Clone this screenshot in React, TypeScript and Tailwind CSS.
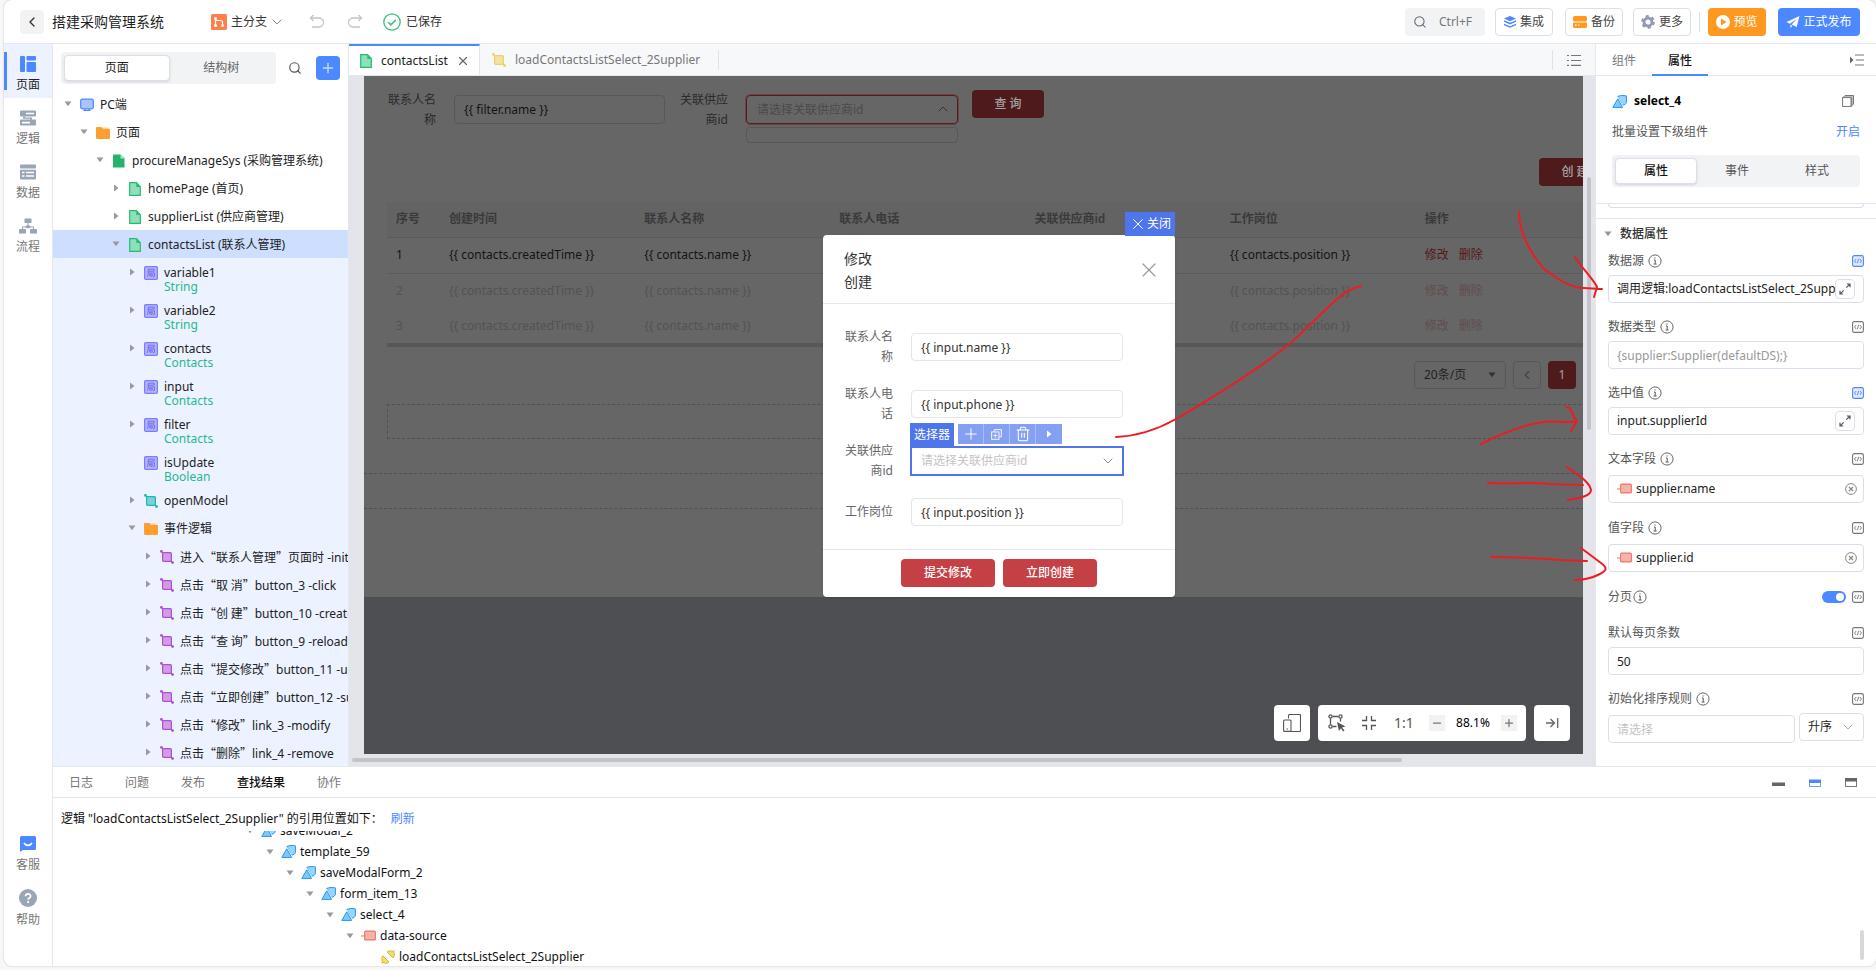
import React, { useState } from "react";
import {
  ChevronDown,
  ChevronLeft,
  ChevronUp,
  Minus,
  Plus,
  Search,
  Trash2,
  X,
} from "lucide-react";

type IconProps = { className?: string };

/* ---------- icons ---------- */

function PageIcon({ solid = false }: { solid?: boolean }) {
  return (
    <svg viewBox="0 0 14 14" className="h-3.5 w-3.5 shrink-0">
      {solid ? (
        <>
          <path d="M1 0.5h7.5l4 4V13.5H1z" fill="#24b36b" />
          <path d="M8.5 0.5l4 4h-4z" fill="#a5e3c5" />
        </>
      ) : (
        <path d="M1.7 0.7h6.8l3.8 4v8.6H1.7z" fill="#8fdfb8" stroke="#24bd70" strokeWidth="1.2" />
      )}
      {!solid && <path d="M8.3 0.7l4 4.2h-4z" fill="#24bd70" />}
    </svg>
  );
}

function FolderIcon() {
  return (
    <svg viewBox="0 0 14 14" className="h-3.5 w-3.5 shrink-0">
      <path d="M6 3V1.6h6.2l1.2 2V5z" fill="#ffd08a" />
      <path d="M0 2.2C0 1.4.5 1 1.2 1h4L7 3h6c.6 0 1 .4 1 1v7.8c0 .7-.4 1.2-1.2 1.2H1.2C.5 13 0 12.5 0 11.8z" fill="#fb9f30" />
    </svg>
  );
}

function MonitorIcon() {
  return (
    <svg viewBox="0 0 14 14" className="h-3.5 w-3.5 shrink-0">
      <rect x="0.7" y="1.2" width="12.6" height="9.6" rx="1.5" fill="#a9c5ff" stroke="#4c88ff" strokeWidth="1.2" />
      <path d="M3.5 12.5h7M5 11v1.5M9 11v1.5" stroke="#4c88ff" strokeWidth="1.2" />
    </svg>
  );
}

function VariableIcon() {
  return (
    <svg viewBox="0 0 14 14" className="h-3.5 w-3.5 shrink-0">
      <rect x="0.6" y="0.6" width="12.8" height="12.8" rx="1.2" fill="#b3b4ff" stroke="#7d7bff" strokeWidth="1.2" />
      <path d="M4.2 3.2h6v2h-6zM4.2 5.2v3l-1 2.6M4.5 7h6v3.3l-1.5.5M5.7 8.3h2.6v1.8H5.7z" fill="none" stroke="#6a68f0" strokeWidth="0.9" />
    </svg>
  );
}

function LogicIcon({ tone }: { tone: "teal" | "purple" | "yellow" }) {
  const colors = {
    teal: ["#78d3d4", "#22b5b6"],
    purple: ["#d29be8", "#b04fd6"],
    yellow: ["#f3e3a3", "#ecd06a"],
  };
  const [fill, stroke] = colors[tone];
  return (
    <svg viewBox="0 0 14 14" className="h-3.5 w-3.5 shrink-0">
      <path d="M1.4 1.4l2 2M10.5 10.5l2 2" stroke={stroke} strokeWidth="1.2" />
      <rect x="2.6" y="2.6" width="8.8" height="8.8" rx="1" fill={fill} stroke={stroke} strokeWidth="1.2" />
      <circle cx="1.4" cy="1.4" r="1.4" fill={stroke} />
      <circle cx="12.6" cy="12.6" r="1.4" fill={stroke} />
    </svg>
  );
}

function WidgetIcon() {
  return (
    <svg viewBox="0 0 15 13" className="h-[13px] w-[15px] shrink-0">
      <path d="M5.800 1.400C8.500.4 11.500.3 14.400.9v6.300c-.4 1.800-1.800 2.800-4 3z" fill="#99d5ff" stroke="#2196f3" />
      <path d="M5.800 3.800L10.600 12.400H.8z" fill="#7cc8ff" stroke="#fff" strokeWidth="2.400" />
      <path d="M5.800 3.800L10.600 12.400H.8z" fill="#7cc8ff" stroke="#2196f3" />
    </svg>
  );
}

function FieldIcon() {
  return (
    <svg viewBox="0 0 15 12" className="h-3 w-[15px] shrink-0">
      <path d="M0 6h3" stroke="#f0a095" strokeWidth="1.5" />
      <rect x="3.6" y="1.1" width="10.8" height="8.8" rx="1" fill="#f6b3a8" stroke="#e8796a" strokeWidth="1.1" />
    </svg>
  );
}

function CallIcon() {
  return (
    <svg viewBox="0 0 14 14" className="h-3.5 w-3.5 shrink-0">
      <path d="M.5 13.5l1.500-1.500M13.500.5L12 2" stroke="#d9b930" strokeWidth="1.200" />
      <path d="M1.800 5.800l6.200 6.200c-2 1.600-4.600 1.600-6 .2-1.400-1.500-1.700-4.300-.2-6.400z" fill="#f1dc7a" stroke="#d9b930" />
      <path d="M6 2l6 6c1.700-1.800 2-4.500.6-6C11.200.600 8 .400 6 2z" fill="#f1dc7a" stroke="#d9b930" />
    </svg>
  );
}

function InfoIcon() {
  return (
    <svg viewBox="0 0 14 14" className="h-3.5 w-3.5 shrink-0" fill="none" stroke="#555">
      <circle cx="7" cy="7" r="6.1" strokeWidth="0.9" />
      <path d="M6 6h1.200v3.800M5.600 10h3M7 3.400v1.200" strokeWidth="1" />
    </svg>
  );
}

function CodeIcon({ active = false }: { active?: boolean }) {
  return (
    <svg viewBox="0 0 12 12" className="h-3 w-3 shrink-0" fill={active ? "#dfe9ff" : "none"} stroke={active ? "#4c88ff" : "#777"}>
      <rect x="0.6" y="0.6" width="10.8" height="10.8" rx="1.6" strokeWidth="1.1" />
      <path d="M4.2 4L2.5 6l1.7 2M7.8 4l1.7 2-1.7 2M6.6 3.8L5.4 8.2" strokeWidth="0.9" fill="none" />
    </svg>
  );
}

function Caret({ open, className = "" }: { open: boolean; className?: string }) {
  return (
    <svg viewBox="0 0 8 8" className={`h-2 w-2 shrink-0 ${className}`} fill="#999">
      {open ? <path d="M0.5 1.5h7L4 6.2z" /> : <path d="M2 0.5v7L6.5 4z" />}
    </svg>
  );
}

function UndoIcon({ className = "" }: IconProps) {
  return (
    <svg viewBox="0 0 16 16" className={`h-4 w-4 ${className}`} fill="none" stroke="#c4c4c4" strokeWidth="1.3">
      <path d="M4.5 1L1.5 4l3 3" />
      <path d="M1.5 4H10a4.5 4.5 0 010 9H3" />
    </svg>
  );
}

function NavPagesIcon() {
  return (
    <svg viewBox="0 0 16 16" className="h-4 w-4" fill="#4c88ff">
      <rect x="0" y="0" width="5" height="16" rx="1" />
      <rect x="6.5" y="0" width="9.5" height="4.5" rx="1" />
      <rect x="6.5" y="6" width="9.5" height="10" rx="1" />
    </svg>
  );
}

function NavLogicIcon() {
  return (
    <svg viewBox="0 0 16 16" className="h-4 w-4" fill="#9aa5b5">
      <path fillRule="evenodd" d="M1 0.5h14a1 1 0 011 1v4a1 1 0 01-1 1H1a1 1 0 01-1-1v-4a1 1 0 011-1zM6 2.700v1.600h8V2.700z" />
      <path fillRule="evenodd" d="M1 9.5h14a1 1 0 011 1v4a1 1 0 01-1 1H1a1 1 0 01-1-1v-4a1 1 0 011-1zM2 11.8v1.6h8v-1.600z" />
      <path d="M3 6.5h2v1h7v2.2h-2V8.800H3z" />
    </svg>
  );
}

function NavDataIcon() {
  return (
    <svg viewBox="0 0 16 16" className="h-4 w-4">
      <rect x="0" y="0.5" width="16" height="4" rx="1" fill="#9aa5b5" />
      <path fill="#9aa5b5" d="M0 5.8h16V14.5a1 1 0 01-1 1H1a1 1 0 01-1-1z" />
      <path d="M2 8.5h2.5M6 8.5h8M2 12h2.5M6 12h8" stroke="#fff" strokeWidth="1.5" />
    </svg>
  );
}

function NavFlowIcon() {
  return (
    <svg viewBox="0 0 18 16" className="h-4 w-[18px]" fill="#9aa5b5">
      <rect x="5.5" y="0.5" width="7" height="4.5" rx="0.5" />
      <rect x="0" y="11" width="7" height="4.5" rx="0.5" />
      <rect x="11" y="11" width="7" height="4.5" rx="0.5" />
      <path d="M8.5 5h1v2l2.5 1.5h3V11h-1V9.5h-2.5L9 10.5l-2.5-1H4V11H3V8.5h3L8.5 7z" />
    </svg>
  );
}

function ChatIcon() {
  return (
    <svg viewBox="0 0 16 16" className="h-4 w-4">
      <path d="M1.5 0H14.5a1.5 1.5 0 011.5 1.5v11a1.5 1.5 0 01-1.5 1.5H3L0 16V1.5A1.5 1.5 0 011.5 0z" fill="#4c88ff" />
      <path d="M4 7c2 3.2 6 3.2 8 0" stroke="#fff" strokeWidth="1.6" fill="none" />
    </svg>
  );
}

function HelpIcon() {
  return (
    <svg viewBox="0 0 18 18" className="h-[18px] w-[18px]">
      <circle cx="9" cy="9" r="9" fill="#9aa5b5" />
      <path d="M6.6 7.2c0-3.2 5-3.2 5 0 0 1.8-2.5 1.7-2.5 3.6M9.1 12v2" stroke="#fff" strokeWidth="1.7" fill="none" />
    </svg>
  );
}

/* ---------- data ---------- */

type Row = {
  level: number;
  label: string;
  quote?: string;
  icon: React.ReactNode;
  open?: boolean;
  leaf?: boolean;
  type?: string;
};

const topRows: Row[] = [
  { level: 0, label: "PC端", icon: <MonitorIcon />, open: true },
  { level: 1, label: "页面", icon: <FolderIcon />, open: true },
  { level: 2, label: "procureManageSys (采购管理系统)", icon: <PageIcon solid />, open: true },
  { level: 3, label: "homePage (首页)", icon: <PageIcon /> },
  { level: 3, label: "supplierList (供应商管理)", icon: <PageIcon /> },
];

const childRows: Row[] = [
  { level: 4, label: "variable1", type: "String", icon: <VariableIcon /> },
  { level: 4, label: "variable2", type: "String", icon: <VariableIcon /> },
  { level: 4, label: "contacts", type: "Contacts", icon: <VariableIcon /> },
  { level: 4, label: "input", type: "Contacts", icon: <VariableIcon /> },
  { level: 4, label: "filter", type: "Contacts", icon: <VariableIcon /> },
  { level: 4, label: "isUpdate", type: "Boolean", icon: <VariableIcon />, leaf: true },
  { level: 4, label: "openModel", icon: <LogicIcon tone="teal" /> },
  { level: 4, label: "事件逻辑", icon: <FolderIcon />, open: true },
  { level: 5, quote: "进入“联系人管理”页面时", label: " -init", icon: <LogicIcon tone="purple" /> },
  { level: 5, quote: "点击“取 消”", label: "button_3 -click", icon: <LogicIcon tone="purple" /> },
  { level: 5, quote: "点击“创 建”", label: "button_10 -create", icon: <LogicIcon tone="purple" /> },
  { level: 5, quote: "点击“查 询”", label: "button_9 -reload", icon: <LogicIcon tone="purple" /> },
  { level: 5, quote: "点击“提交修改”", label: "button_11 -update", icon: <LogicIcon tone="purple" /> },
  { level: 5, quote: "点击“立即创建”", label: "button_12 -submit", icon: <LogicIcon tone="purple" /> },
  { level: 5, quote: "点击“修改”", label: "link_3 -modify", icon: <LogicIcon tone="purple" /> },
  { level: 5, quote: "点击“删除”", label: "link_4 -remove", icon: <LogicIcon tone="purple" /> },
];

const resultRows = [
  { label: "saveModal_2", icon: <WidgetIcon /> },
  { label: "template_59", icon: <WidgetIcon /> },
  { label: "saveModalForm_2", icon: <WidgetIcon /> },
  { label: "form_item_13", icon: <WidgetIcon /> },
  { label: "select_4", icon: <WidgetIcon /> },
  { label: "data-source", icon: <FieldIcon /> },
  { label: "loadContactsListSelect_2Supplier", icon: <CallIcon />, leaf: true },
];

const indent = ["pl-[7px]", "pl-[23px]", "pl-[39px]", "pl-[55px]", "pl-[71px]", "pl-[87px]"];

/* ---------- header ---------- */

function Header() {
  return (
    <header className="flex h-11 shrink-0 items-center border-b border-[#e4e7ed] pl-4 pr-4 pt-px">
      <button aria-label="返回" className="flex h-6 w-6 items-center justify-center rounded bg-[#f2f2f3] text-[#333]">
        <ChevronLeft className="h-4 w-4" strokeWidth={2} />
      </button>
      <h1 className="ml-2 text-sm text-[#222]">搭建采购管理系统</h1>
      <button className="ml-[47px] flex items-center text-[#333]">
        <svg viewBox="0 0 16 16" className="mr-1 h-4 w-4">
          <rect width="16" height="16" rx="1.5" fill="#ff7f4a" />
          <path d="M4.500 4.500v7M4.500 6.500h5a2 2 0 012 2v2.500" fill="none" stroke="#fff" strokeWidth="1.200" />
          <g fill="#fff">
            <circle cx="4.5" cy="4.5" r="1.5" />
            <circle cx="4.5" cy="11.5" r="1.5" />
            <circle cx="11.5" cy="11.5" r="1.5" />
          </g>
        </svg>
        主分支
        <ChevronDown className="ml-0.5 h-4 w-4 text-[#888]" strokeWidth={1.500} />
      </button>
      <button aria-label="撤销" className="ml-6">
        <UndoIcon />
      </button>
      <button aria-label="重做" className="ml-[22px]">
        <UndoIcon className="-scale-x-100" />
      </button>
      <svg viewBox="0 0 18 18" className="ml-5 h-[18px] w-[18px]" fill="none" stroke="#3bc17c" strokeWidth="1.3">
        <circle cx="9" cy="9" r="8.2" />
        <path d="M5.2 9.2l2.7 2.7 5-5.2" strokeWidth="1.6" />
      </svg>
      <span className="ml-[5px] text-[#333]">已保存</span>

      <div className="ml-auto flex items-center text-[#444]">
        <button className="flex h-7 w-20 items-center rounded bg-[#f2f3f5] pl-2 text-[#777]">
          <Search className="mr-3 h-3.5 w-3.5 text-[#666]" strokeWidth={1.800} />
          Ctrl+F
        </button>
        <button className="ml-2.5 flex h-7 w-[58px] items-center justify-center gap-1 rounded border border-[#dadfeb]">
          <svg viewBox="0 0 14 14" className="h-3 w-3" fill="#4c88ff">
            <path d="M7 0l7 3-7 3-7-3z" />
            <path d="M0 5l7 3 7-3v1.8l-7 3-7-3z" />
            <path d="M0 9l7 3 7-3v1.8l-7 3-7-3z" />
          </svg>
          集成
        </button>
        <button className="ml-3 flex h-7 w-[58px] items-center justify-center gap-1 rounded border border-[#dadfeb]">
          <svg viewBox="0 0 14 12" className="h-3 w-3.5" fill="#ff9a1e">
            <rect width="14" height="5.4" rx="1.5" />
            <path fillRule="evenodd" d="M0 6.5h14v4A1.5 1.5 0 0112.5 12h-11A1.5 1.5 0 010 10.5zM2 8.5v1.3h1.5V8.5zM5 8.5v1.3h1.5V8.5z" />
          </svg>
          备份
        </button>
        <button className="ml-2.5 flex h-7 w-[58px] items-center justify-center gap-1 rounded border border-[#dadfeb]">
          <svg viewBox="0 0 14 14" className="h-3.5 w-3.5" fill="none" stroke="#9499b8">
            <circle cx="7" cy="7" r="4" strokeWidth="2.8" />
            <circle cx="7" cy="7" r="5.9" strokeWidth="2" strokeDasharray="3.1 3.07" />
          </svg>
          更多
        </button>
        <span className="ml-2 h-5 w-px bg-[#dadfeb]" />
        <button className="ml-2 flex h-7 w-[58px] items-center justify-center gap-[3px] rounded bg-[#ff981e] text-white">
          <svg viewBox="0 0 14 14" className="h-3.5 w-3.5">
            <circle cx="7" cy="7" r="7" fill="#fff" />
            <path d="M5 3.5v7L10.5 7z" fill="#ff981e" />
          </svg>
          预览
        </button>
        <button className="ml-3 flex h-7 w-[82px] items-center justify-center gap-[3px] rounded bg-[#4c88ff] text-white">
          <svg viewBox="0 0 14 13" className="h-3 w-3.5" fill="#fff">
            <path d="M14 0L0 6.5l3.5 1.8L11.5 3 5.5 9.2 11 12z" />
            <path d="M4.3 9.5V13l2-2.4z" />
          </svg>
          正式发布
        </button>
      </div>
    </header>
  );
}

/* ---------- left side ---------- */

function NavRail() {
  const top = [
    { label: "页面", icon: <NavPagesIcon />, active: true },
    { label: "逻辑", icon: <NavLogicIcon /> },
    { label: "数据", icon: <NavDataIcon /> },
    { label: "流程", icon: <NavFlowIcon /> },
  ];
  const bottom = [
    { label: "客服", icon: <ChatIcon /> },
    { label: "帮助", icon: <HelpIcon /> },
  ];
  return (
    <nav className="flex w-[49px] shrink-0 flex-col border-r border-[#e4e7ed]">
      {top.map((item) => (
        <button
          key={item.label}
          className={`relative flex h-[54px] flex-col items-center justify-center gap-[5px] pt-1.5 ${item.active ? "bg-[#ecf2ff] text-[#222]" : "text-[#777]"}`}
        >
          {item.active && <span className="absolute left-0 top-2 h-[38px] w-[3px] bg-[#4c88ff]" />}
          {item.icon}
          <span className="leading-4">{item.label}</span>
        </button>
      ))}
      <div className="mt-auto flex flex-col pb-[34px]">
        {bottom.map((item) => (
          <button key={item.label} className="flex h-[54px] flex-col items-center justify-center gap-[5px] pt-1.5 text-[#777]">
            {item.icon}
            <span className="leading-4">{item.label}</span>
          </button>
        ))}
      </div>
    </nav>
  );
}

function TreeRow({ row }: { row: Row }) {
  return (
    <li className={`flex items-start whitespace-nowrap ${row.type ? "h-[38px]" : "h-7"} ${indent[row.level]}`}>
      <span className="mr-1 flex h-7 w-4 shrink-0 items-center justify-center">
        {!row.leaf && <Caret open={!!row.open} />}
      </span>
      <span className="mr-1.5 flex h-7 shrink-0 items-center pt-0.5">{row.icon}</span>
      <span className="min-w-0 pt-px leading-7">
        {row.quote && <span className="font-['Noto_Sans_CJK_SC',sans-serif]">{row.quote}</span>}
        {row.label}
        {row.type && <span className="-mt-1.5 block leading-3 text-[#27b98e]">{row.type}</span>}
      </span>
    </li>
  );
}

function TreePanel() {
  const [tab, setTab] = useState("页面");
  return (
    <aside className="flex w-[296px] shrink-0 flex-col overflow-hidden border-r border-[#e4e7ed]">
      <div className="flex h-[46px] shrink-0 items-center pl-2 pr-2 pt-0.5">
        <div className="flex h-8 w-[215px] items-center rounded bg-[#f2f3f5] p-[3px]">
          {["页面", "结构树"].map((name) => (
            <button
              key={name}
              onClick={() => setTab(name)}
              className={`h-[26px] flex-1 rounded ${tab === name ? "border border-[#dadfeb] bg-white text-[#222] shadow-sm" : "text-[#666]"}`}
            >
              {name}
            </button>
          ))}
        </div>
        <button aria-label="搜索" className="ml-3">
          <Search className="h-3.5 w-3.5 text-[#555]" />
        </button>
        <button aria-label="新建" className="ml-auto flex h-6 w-6 items-center justify-center rounded bg-[#4c88ff] text-[#c5d9ff]">
          <Plus className="h-4 w-4" />
        </button>
      </div>
      <ul className="text-[#222]">
        {topRows.map((row) => (
          <TreeRow key={row.label} row={row} />
        ))}
      </ul>
      <ul className="bg-[#cddeff] text-[#222]">
        <TreeRow row={{ level: 3, label: "contactsList (联系人管理)", icon: <PageIcon />, open: true }} />
      </ul>
      <ul className="flex-1 bg-[#ecf2ff] text-[#222]">
        {childRows.map((row) => (
          <TreeRow key={row.label + row.quote} row={row} />
        ))}
      </ul>
    </aside>
  );
}

/* ---------- design canvas ---------- */

function EditorTabs() {
  return (
    <div className="flex h-8 shrink-0 items-center border-b border-[#e4e7ed] bg-[#f7f8fa]">
      <button className="flex h-full w-[131px] items-center border-r border-t-2 border-r-[#e4e7ed] border-t-[#4c88ff] bg-white pl-2.5 text-[#222]">
        <PageIcon />
        <span className="ml-2">contactsList</span>
        <X className="ml-2 h-3.5 w-3.5 text-[#666]" />
      </button>
      <button className="flex items-center pl-3 pr-[18px] text-[#777]">
        <LogicIcon tone="yellow" />
        <span className="ml-[9px]">loadContactsListSelect_2Supplier</span>
      </button>
      <span className="h-5 w-px bg-[#dfe2e9]" />
      <span className="ml-auto h-5 w-px bg-[#dfe2e9]" />
      <button aria-label="标签列表" className="px-3.5">
        <svg viewBox="0 0 14 12" className="h-3 w-3.5" stroke="#777" strokeWidth="1.2">
          <path d="M0 1.500h2M4 1.500h10M0 6.500h2M4 6.500h10M0 11.400h2M4 11.400h10" />
        </svg>
      </button>
    </div>
  );
}

function ContactsTable() {
  const heads = ["序号", "创建时间", "联系人名称", "联系人电话", "关联供应商id", "工作岗位", "操作"];
  return (
    <table className="mt-4 w-full table-fixed border-b-4 border-[#575757] text-left">
      <thead>
        <tr className="h-[35px] border-b border-[#5b5b5b] bg-[#636363] text-[#3a3a3a]">
          {heads.map((head, i) => (
            <th key={head} className={`pl-[9px] font-semibold ${i === 0 ? "w-[53px]" : ""}`}>
              {head}
            </th>
          ))}
        </tr>
      </thead>
      <tbody>
        {[1, 2, 3].map((n) => (
          <tr key={n} className={`h-9 ${n === 1 ? "border-b border-[#5b5b5b] text-[#141414]" : "text-[#535353]"}`}>
            <td className="pl-[9px]">{n}</td>
            <td className="pl-[9px]">{"{{ contacts.createdTime }}"}</td>
            <td className="pl-[9px]">{"{{ contacts.name }}"}</td>
            <td />
            <td />
            <td className="pl-[9px]">{"{{ contacts.position }}"}</td>
            <td className={`pl-[9px] ${n === 1 ? "text-[#561719]" : "text-[#614d4e]"}`}>
              <a href="#edit">修改</a>
              <a href="#delete" className="ml-2.5">删除</a>
            </td>
          </tr>
        ))}
      </tbody>
    </table>
  );
}

function ModalRow({ id, label, children }: { id: string; label: string; children: React.ReactNode }) {
  const wrap = label.length > 4;
  return (
    <div className={`flex ${wrap ? "h-10 items-start" : "h-7 items-center"}`}>
      <label htmlFor={id} className="w-[49px] shrink-0 text-right leading-5 text-[#666]">
        {label}
      </label>
      <div className={`relative ml-[18px] w-[212px] ${wrap ? "mt-1.5" : ""}`}>{children}</div>
    </div>
  );
}

function EditModal() {
  const input = "block h-7 w-full rounded border border-[#e5e5e5] bg-white px-[9px] text-[#333] outline-none";
  return (
    <section className="absolute left-1/2 top-[159px] w-[352px] -translate-x-1/2 rounded bg-white shadow">
      <button className="absolute -top-[23px] right-0 flex h-6 w-[50px] items-center justify-center bg-[#4e75ec] text-white">
        <X className="h-[18px] w-[18px]" strokeWidth={1.3} />
        关闭
      </button>
      <div className="flex items-center justify-between border-b border-[#e8e8e8] pb-[10px] pl-[21px] pr-3.5 pt-3">
        <h2 className="text-sm leading-[23px] text-[#333]">
          修改
          <br />
          创建
        </h2>
        <button aria-label="关闭弹窗">
          <X className="h-6 w-6 text-[#999]" strokeWidth={1.2} />
        </button>
      </div>
      <form className="flex flex-col gap-[17px] px-[21px] pb-[23px] pt-[23px]">
        <ModalRow id="m-name" label="联系人名称">
          <input id="m-name" className={input} defaultValue="{{ input.name }}" />
        </ModalRow>
        <ModalRow id="m-phone" label="联系人电话">
          <input id="m-phone" className={input} defaultValue="{{ input.phone }}" />
        </ModalRow>
        <ModalRow id="m-supplier" label="关联供应商id">
          <select id="m-supplier" className="block h-7 w-full appearance-none bg-white px-2.5 text-[#c4c4c4] outline-2 -outline-offset-1 outline-[#4e75ec]">
            <option>请选择关联供应商id</option>
          </select>
          <ChevronDown className="pointer-events-none absolute right-[7px] top-1.5 h-4 w-4 text-[#888]" strokeWidth={1.5} />
          <div className="absolute -left-px -top-6 flex items-start text-white">
            <span className="flex h-6 w-11 items-center justify-center bg-[#4e75ec]">选择器</span>
            <div className="ml-1 mt-px flex h-5 divide-x divide-[#a9bcf7] bg-[#859ff2]">
              <button type="button" aria-label="添加" className="flex w-[26px] items-center justify-center">
                <Plus className="h-[18px] w-[18px]" strokeWidth={1.3} />
              </button>
              <button type="button" aria-label="复制" className="flex w-[26px] items-center justify-center">
                <svg viewBox="0 0 12 12" className="h-[11px] w-[11px]" fill="none" stroke="#fff">
                  <path d="M3.5 3V.7h7.8v7.8H9" />
                  <rect x="0.7" y="3.2" width="8" height="8" />
                  <path d="M4.7 5v4.5M2.5 7.2H7" />
                </svg>
              </button>
              <button type="button" aria-label="删除" className="flex w-[26px] items-center justify-center">
                <Trash2 className="h-4 w-4" strokeWidth={1.6} />
              </button>
              <button type="button" aria-label="更多操作" className="flex w-[26px] items-center justify-center">
                <svg viewBox="0 0 8 8" className="h-2 w-2" fill="#fff">
                  <path d="M2 0.5v7L6.5 4z" />
                </svg>
              </button>
            </div>
          </div>
        </ModalRow>
        <ModalRow id="m-position" label="工作岗位">
          <input id="m-position" className={input} defaultValue="{{ input.position }}" />
        </ModalRow>
      </form>
      <div className="flex justify-center gap-2 border-t border-[#e8e8e8] pb-2.5 pt-[9px] font-medium text-white">
        <button className="h-7 w-[94px] rounded bg-[#c54044]">提交修改</button>
        <button className="h-7 w-[94px] rounded bg-[#c54044]">立即创建</button>
      </div>
    </section>
  );
}

function Artboard() {
  const box = "rounded border border-[#585858]";
  return (
    <div className="relative h-[521px] w-[1270px] bg-[#666] pt-3.5 text-[#2a2a2a]">
      <div className="px-[23px]">
        <div className="flex h-[52px] items-start">
          <label htmlFor="f-name" className="w-[49px] text-right leading-5">联系人名称</label>
          <input
            id="f-name"
            defaultValue="{{ filter.name }}"
            className={`ml-[18px] mt-[5px] h-[29px] w-[211px] px-[9px] text-[#141414] outline-none ${box}`}
          />
          <label htmlFor="f-supplier" className="ml-3.5 w-[49px] text-right leading-5">关联供应商id</label>
          <div className="relative ml-[18px] mt-[5px] w-[212px]">
            <select
              id="f-supplier"
              className="block h-[29px] w-full appearance-none rounded border border-[#561b1d] px-2.5 text-[#4a4a4a] outline outline-[#6a4445]"
            >
              <option>请选择关联供应商id</option>
            </select>
            <ChevronUp className="pointer-events-none absolute right-[7px] top-1.5 h-4 w-4 text-[#333]" strokeWidth={1.5} />
            <div className={`mt-[3px] h-4 ${box}`} />
          </div>
          <button className="ml-3.5 h-7 w-[72px] rounded bg-[#4f1a1b] font-medium text-[#a3a3a3]">查 询</button>
        </div>
        <div className="mt-4 flex justify-end">
          <button className="h-7 w-[72px] rounded bg-[#4f1a1b] font-medium text-[#a3a3a3]">创 建</button>
        </div>
        <ContactsTable />
        <div className="mt-3.5 flex justify-end gap-[7px]">
          <div className="relative">
            <select aria-label="每页条数" className={`h-7 w-[92px] appearance-none px-[9px] text-[#222] ${box}`}>
              <option>20条/页</option>
            </select>
            <svg viewBox="0 0 8 8" className="pointer-events-none absolute right-2.5 top-2.5 h-2 w-2" fill="#333">
              <path d="M0.5 1.5h7L4 6.2z" />
            </svg>
          </div>
          <button aria-label="上一页" className={`flex h-7 w-7 items-center justify-center text-[#444] ${box}`}>
            <ChevronLeft className="h-3.5 w-3.5" />
          </button>
          <button className="h-7 w-7 rounded bg-[#4f1a1b] text-[#a3a3a3]">1</button>
          <button aria-label="下一页" className={`h-7 w-7 ${box}`} />
        </div>
        <div className="mt-[15px] h-[35px] border border-dashed border-[#505050]" />
      </div>
      <div className="mt-[34px] h-9 border-y border-dashed border-[#505050]" />
      <EditModal />
    </div>
  );
}

function ZoomBar() {
  return (
    <div className="absolute bottom-[13px] right-[13px] flex gap-2 text-[#555]">
      <button aria-label="设备" className="flex h-9 w-9 items-center justify-center rounded bg-white">
        <svg viewBox="0 0 18 18" className="h-[18px] w-[18px]" fill="none" stroke="#555" strokeWidth="1.1">
          <path d="M5.5 4.5V1.5a1 1 0 011-1h10a1 1 0 011 1v15a1 1 0 01-1 1H8" />
          <rect x="0.6" y="6" width="7.4" height="11.4" rx="1" />
          <path d="M3.5 15h1.5" />
        </svg>
      </button>
      <div className="flex h-9 w-[208px] items-center rounded bg-white pl-2.5 pr-[9px]">
        <button aria-label="框选">
          <svg viewBox="0 0 18 18" className="h-[18px] w-[18px]" fill="none" stroke="#555" strokeWidth="1.3">
            <path d="M4.5 2.5h6M2.5 4.5v6M12.5 4.5v3M4.5 12.5h4" />
            <circle cx="2.5" cy="2.5" r="1.6" />
            <circle cx="12.5" cy="2.5" r="1.6" />
            <circle cx="2.5" cy="12.5" r="1.6" />
            <path d="M9 8l8.5 4.5-3.5 1 2.5 3-1.5 1-2-3.2-2 2.7z" fill="#555" stroke="none" />
          </svg>
        </button>
        <button aria-label="适应画布" className="ml-4">
          <svg viewBox="0 0 14 14" className="h-3.5 w-3.5" fill="none" stroke="#555" strokeWidth="1.3">
            <path d="M0 4.5h4.5V0M9.5 0v4.5H14M14 9.5H9.5V14M4.5 14V9.5H0" />
          </svg>
        </button>
        <button className="ml-[18px] w-[18px] text-[14px]">1:1</button>
        <button aria-label="缩小" className="ml-[17px] flex h-4 w-4 shrink-0 items-center justify-center bg-[#f2f2f3] text-[#777]">
          <Minus className="h-3 w-3" strokeWidth={2.5} />
        </button>
        <span className="flex-1 text-center text-black">88.1%</span>
        <button aria-label="放大" className="flex h-4 w-4 shrink-0 items-center justify-center bg-[#f2f2f3] text-[#777]">
          <Plus className="h-3 w-3" strokeWidth={2.5} />
        </button>
      </div>
      <button aria-label="收起" className="flex h-9 w-9 items-center justify-center rounded bg-white">
        <svg viewBox="0 0 14 12" className="h-3 w-3.5" fill="none" stroke="#666" strokeWidth="1.3">
          <path d="M1 6h8.5M5.5 2l4 4-4 4M12.7 1v10" />
        </svg>
      </button>
    </div>
  );
}

function Canvas() {
  return (
    <main className="flex min-w-0 flex-1 flex-col">
      <EditorTabs />
      <div className="grid min-h-0 flex-1 grid-cols-[15px_minmax(0,1fr)_12px] grid-rows-[minmax(0,1fr)_12px] bg-[#e4e5eb]">
        <span />
        <div className="relative overflow-hidden bg-[#4e4f53]">
          <Artboard />
          <ZoomBar />
        </div>
        <div className="flex flex-col items-center">
          <span className="mt-[101px] h-[253px] w-1 rounded bg-[#c3c4c8]" />
        </div>
        <div className="col-span-3 flex items-center pl-[3px]">
          <span className="h-1 w-[84.5%] rounded bg-[#c3c4c8]" />
        </div>
      </div>
    </main>
  );
}

/* ---------- property panel ---------- */

type FieldProps = {
  id: string;
  label: string;
  info?: boolean;
  active?: boolean;
  children?: React.ReactNode;
  extra?: React.ReactNode;
};

function Field({ id, label, info = true, active = false, children, extra }: FieldProps) {
  return (
    <div>
      <div className="flex h-6 items-center">
        <label htmlFor={id} className={`text-[#555] ${extra ? "mr-px" : "mr-1"}`}>{label}</label>
        {info && <InfoIcon />}
        <span className="ml-auto flex items-center gap-1.5">
          {extra}
          <CodeIcon active={active} />
        </span>
      </div>
      {children}
    </div>
  );
}

const field = "h-7 w-full rounded border border-[#dadfeb] bg-white px-2 text-[#222] outline-none placeholder:text-[#999]";

function ExpandInput({ id, value }: { id: string; value: string }) {
  return (
    <div className="mt-0.5 flex h-7 items-center rounded border border-[#dadfeb] pl-2 pr-2">
      <input id={id} defaultValue={value} className="min-w-0 flex-1 text-[#222] outline-none" />
      <button aria-label="展开" className="flex h-5 w-5 items-center justify-center rounded border border-[#dadfeb] bg-white">
        <svg viewBox="0 0 12 12" className="h-3 w-3" fill="none" stroke="#555" strokeWidth="1.2">
          <path d="M7.3 4.7l3.5-3.5M7.8 1h3.2v3.2M4.7 7.3L1.2 10.8M1 7.8V11h3.2" />
        </svg>
      </button>
    </div>
  );
}

function TagInput({ id, value }: { id: string; value: string }) {
  return (
    <div className="mb-px mt-1 flex h-7 items-center rounded border border-[#dadfeb] pl-2 pr-1.5">
      <FieldIcon />
      <input id={id} defaultValue={value} className="ml-1 min-w-0 flex-1 text-[#222] outline-none" />
      <button aria-label="清除">
        <svg viewBox="0 0 12 12" className="h-3 w-3" fill="none" stroke="#888">
          <circle cx="6" cy="6" r="5.4" />
          <path d="M4 4l4 4M8 4L4 8" strokeWidth="1.2" />
        </svg>
      </button>
    </div>
  );
}

function PropertyPanel() {
  return (
    <aside className="flex w-[281px] shrink-0 flex-col overflow-hidden border-l border-[#e4e7ed]">
      <div className="flex h-8 shrink-0 items-center border-b border-[#e4e7ed] pr-3">
        <button className="ml-4 h-8 pt-0.5 text-[#777]">组件</button>
        <button className="ml-4 h-8 w-14 border-b-2 border-[#4c88ff] pt-1 font-medium text-[#111]">属性</button>
        <button aria-label="折叠面板" className="ml-auto">
          <svg viewBox="0 0 14 12" className="h-3 w-3.5" stroke="#777" strokeWidth="1.2">
            <path d="M5 1h9M6 6h8M5 11h9" />
            <path d="M0 2.5v7L3.5 6z" fill="#666" stroke="none" />
          </svg>
        </button>
      </div>

      <div className="shrink-0 border-b border-[#e4e7ed] px-4 pb-4 pt-2.5">
        <div className="flex h-[30px] items-center">
          <WidgetIcon />
          <strong className="ml-[7px] text-xs font-bold text-black">select_4</strong>
          <button aria-label="复制组件" className="ml-auto mr-1.5">
            <svg viewBox="0 0 12 12" className="h-3 w-3" fill="none" stroke="#777">
              <path d="M9 3v8.5L11.5 9V.5H3L1 2.5" fill="#bbb" />
              <rect x="0.6" y="2.6" width="8.4" height="8.8" fill="#fff" />
            </svg>
          </button>
        </div>
        <div className="flex h-[30px] items-center justify-between pt-0.5">
          <span className="text-[#555]">批量设置下级组件</span>
          <a href="#open" className="text-[#4c88ff]">开启</a>
        </div>
        <div className="mt-[9px] flex h-8 items-center rounded bg-[#f2f3f5] p-[3px] text-[#555]">
          <button className="h-[26px] flex-1 rounded border border-[#dadfeb] bg-white font-medium text-[#111] shadow-sm">属性</button>
          <button className="h-[26px] flex-1">事件</button>
          <button className="h-[26px] flex-1">样式</button>
        </div>
      </div>

      <div className="mx-3 h-1 shrink-0 rounded-b border-x border-b border-[#dadfeb]" />
      <div className="mt-2.5 border-t border-[#e4e7ed] px-3">
        <h3 className="relative flex h-[30px] items-center pl-3 font-medium text-[#333]">
          <Caret open className="absolute -left-1" />
          数据属性
        </h3>
        <div className="flex flex-col gap-3">
          <Field id="p-source" label="数据源" active>
            <ExpandInput id="p-source" value="调用逻辑:loadContactsListSelect_2Supplier" />
          </Field>
          <Field id="p-type" label="数据类型">
            <input id="p-type" className={`mt-0.5 block ${field}`} placeholder="{supplier:Supplier(defaultDS);}" />
          </Field>
          <Field id="p-value" label="选中值" active>
            <ExpandInput id="p-value" value="input.supplierId" />
          </Field>
          <Field id="p-text" label="文本字段">
            <TagInput id="p-text" value="supplier.name" />
          </Field>
          <Field id="p-key" label="值字段">
            <TagInput id="p-key" value="supplier.id" />
          </Field>
          <Field
            id="p-page"
            label="分页"
            extra={
              <input
                id="p-page"
                type="checkbox"
                defaultChecked
                className="flex h-3 w-6 appearance-none items-center rounded-full bg-[#c8ccd4] px-0.5 before:h-2 before:w-2 before:rounded-full before:bg-white checked:justify-end checked:bg-[#4c88ff]"
              />
            }
          />
          <Field id="p-size" label="默认每页条数" info={false}>
            <input id="p-size" className={`mt-0.5 block ${field}`} defaultValue="50" />
          </Field>
          <Field id="p-sort" label="初始化排序规则">
            <div className="mt-0.5 flex items-start gap-1">
              <input id="p-sort" placeholder="请选择" className="mt-0.5 h-7 min-w-0 flex-1 rounded border border-[#dadfeb] bg-white px-2 text-[#222] outline-none placeholder:text-[#c4c4c4]" />
              <div className="relative w-[65px]">
                <select aria-label="排序方式" className={`block appearance-none ${field}`}>
                  <option>升序</option>
                </select>
                <ChevronDown className="pointer-events-none absolute right-2 top-1.5 h-4 w-4 text-[#aaa]" strokeWidth={1.5} />
              </div>
            </div>
          </Field>
        </div>
      </div>
    </aside>
  );
}

/* ---------- bottom panel ---------- */

function ResultPanel() {
  const tabs = ["日志", "问题", "发布", "查找结果", "协作"];
  return (
    <section className="flex h-[200px] shrink-0 flex-col border-t border-[#e4e7ed]">
      <div className="flex h-[31px] shrink-0 items-center border-b border-[#e4e7ed] pl-4 pr-[19px] pt-0.5">
        <div className="flex gap-8">
          {tabs.map((name) => (
            <button key={name} className={name === "查找结果" ? "font-medium text-[#111]" : "text-[#777]"}>
              {name}
            </button>
          ))}
        </div>
        <div className="ml-auto flex items-center gap-6">
          <button aria-label="最小化">
            <svg viewBox="0 0 13 10" className="h-2.5 w-[13px]">
              <rect y="4.5" width="13" height="3.5" fill="#666" />
            </svg>
          </button>
          <button aria-label="还原">
            <svg viewBox="0 0 12 10" className="h-2.5 w-3">
              <rect x="0.5" y="2.5" width="11" height="6" fill="#fff" stroke="#6fa0ff" />
              <rect y="1.5" width="12" height="3.5" fill="#4c88ff" />
            </svg>
          </button>
          <button aria-label="最大化">
            <svg viewBox="0 0 12 10" className="h-2.5 w-3">
              <rect x="0.5" y="0.5" width="11" height="8" fill="#fff" stroke="#777" />
              <rect y="0" width="12" height="3.5" fill="#666" />
            </svg>
          </button>
        </div>
      </div>
      <div className="flex h-[33px] shrink-0 items-end gap-2 pb-0.5 pl-2 leading-5 text-[#111]">
        <p>逻辑 "loadContactsListSelect_2Supplier" 的引用位置如下：</p>
        <a href="#refresh" className="text-[#4c88ff]">刷新</a>
      </div>
      <div className="flex min-h-0 flex-1 justify-between overflow-hidden pr-3">
        <ul className="-mt-[11px] text-[#111]">
          {resultRows.map((row, i) => (
            <li key={row.label} className="flex h-[21px] items-center" style={{ paddingLeft: 193 + i * 20 }}>
              <span className="mr-[7px] flex w-2 shrink-0">{!row.leaf && <Caret open />}</span>
              {row.icon}
              <span className="ml-1 leading-5">{row.label}</span>
            </li>
          ))}
        </ul>
        <span className="mb-1.5 h-[30px] w-1 self-end rounded bg-[#d8d8d8]" />
      </div>
    </section>
  );
}

/* hand-drawn red marks on top of the editor */
function RedMarks() {
  return (
    <svg
      viewBox="0 0 1876 970"
      preserveAspectRatio="none"
      className="pointer-events-none absolute inset-0 h-full w-full"
      fill="none"
      stroke="#ed1c24"
      strokeWidth="2"
      strokeLinecap="round"
      strokeLinejoin="round"
    >
      <path d="M1519 212C1519 232 1530 252 1543 268C1556 278 1570 288 1583 288L1602 289M1575 257C1581 267 1594 280 1597 287L1594 297" />
      <path d="M1116 437C1140 436 1160 428 1176 419C1212 398 1248 376 1282 350C1305 332 1322 312 1336 300C1345 291 1352 288 1361 286" />
      <path d="M1481 444C1500 434 1524 425 1543 422C1556 420 1566 424 1577 421M1566 407C1573 407 1571 416 1577 421L1571 431" />
      <path d="M1488 483C1515 484 1530 482 1550 484L1583 485M1567 467C1574 473 1589 480 1591 490C1591 496 1580 498 1568 500" />
      <path d="M1491 557C1520 557 1545 559 1560 560L1587 561M1581 548L1601 563C1609 569 1605 571 1600 574C1592 578 1583 580 1575 580" />
    </svg>
  );
}

export default function App() {
  return (
    <div className="relative h-screen overflow-hidden bg-[#f7f7f7] pb-1 pl-1 font-['Noto_Sans','Noto_Sans_CJK_SC',sans-serif] text-xs">
      <div className="flex h-full flex-col overflow-hidden rounded-lg bg-white shadow-[0_0_2px_#bbb]">
        <Header />
        <div className="flex min-h-0 flex-1">
          <NavRail />
          <div className="flex min-w-0 flex-1 flex-col">
            <div className="flex min-h-0 flex-1">
              <TreePanel />
              <Canvas />
              <PropertyPanel />
            </div>
            <ResultPanel />
          </div>
        </div>
      </div>
      <RedMarks />
    </div>
  );
}
